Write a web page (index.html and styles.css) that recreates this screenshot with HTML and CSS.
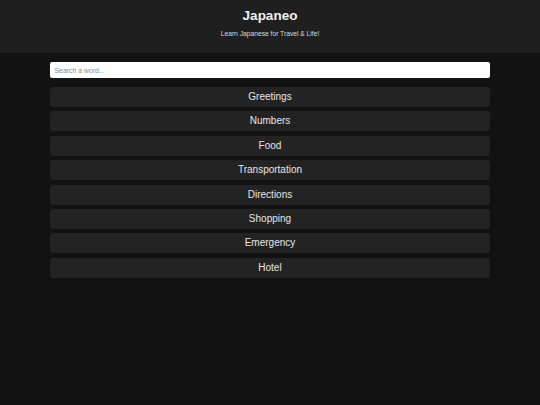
FILE: index.html
```html
<!DOCTYPE html>
<html lang="en">
<head>
<meta charset="utf-8">
<title>Japaneo</title>
<link rel="stylesheet" href="styles.css">
</head>
<body>
<header class="site-header">
  <h1 class="title">Japaneo</h1>
  <p class="subtitle">Learn Japanese for Travel &amp; Life!</p>
</header>
<main class="container">
  <input class="search" type="text" placeholder="Search a word...">
  <div class="categories">
    <button class="cat">Greetings</button>
    <button class="cat">Numbers</button>
    <button class="cat">Food</button>
    <button class="cat">Transportation</button>
    <button class="cat">Directions</button>
    <button class="cat">Shopping</button>
    <button class="cat">Emergency</button>
    <button class="cat">Hotel</button>
  </div>
</main>
</body>
</html>
```
FILE: styles.css
```css
* { box-sizing: border-box; }
html, body {
  margin: 0;
  padding: 0;
  background: #121212;
  font-family: "Liberation Sans", Arial, sans-serif;
  color: #e6e6e6;
  height: 100%;
}
.site-header {
  background: #1f1f1f;
  text-align: center;
  padding: 8px 0 15.3px;
  height: 53px;
}
.title {
  margin: 0;
  font-size: 13.5px;
  line-height: 16px;
  font-weight: bold;
  color: #f2f2f2;
}
.subtitle {
  margin: 5.7px 0 0;
  font-size: 6.7px;
  line-height: 8px;
  color: #dcdcdc;
}
.container {
  width: 440px;
  margin: 0 auto;
  padding-top: 9px;
}
.search {
  display: block;
  width: 100%;
  height: 16px;
  margin: 0;
  padding: 0 4.5px;
  border: none;
  border-radius: 2px;
  background: #ffffff;
  font-family: "Liberation Sans", Arial, sans-serif;
  font-size: 6.9px;
  color: #333;
  outline: none;
}
.search::placeholder { color: #8a8a8a; }
.categories {
  display: flex;
  flex-direction: column;
  gap: 4.4px;
  margin-top: 9px;
}
.cat {
  display: block;
  width: 100%;
  height: 20px;
  margin: 0;
  padding: 0;
  border: none;
  border-radius: 3px;
  background: #232323;
  color: #e6e6e6;
  font-family: "Liberation Sans", Arial, sans-serif;
  font-size: 10px;
  line-height: 20px;
  text-align: center;
  cursor: pointer;
}
```
